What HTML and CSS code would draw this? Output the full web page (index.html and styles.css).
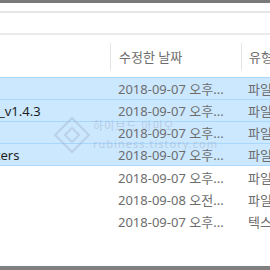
FILE: index.html
```html
<!DOCTYPE html>
<html lang="ko">
<head>
    <meta charset="UTF-8">
    <meta name="viewport" content="width=device-width, initial-scale=1.0">
    <title>파일 탐색기</title>
    <link rel="stylesheet" href="styles.css">
</head>
<body>
    <div class="window">
        <div class="titlebar"></div>
        <div class="ribbon"></div>
        <div class="address"></div>

        <!-- File list, scrolled sideways -->
        <div class="list">
            <div class="list-inner">
                <div class="head">
                    <div class="col name"></div>
                    <div class="col date"><span class="head-cell">수정한 날짜</span></div>
                    <div class="col type"><span class="head-cell">유형</span></div>
                </div>

                <div class="row sel">
                    <div class="col name"></div>
                    <div class="col date">2018-09-07 오후...</div>
                    <div class="col type">파일 폴더</div>
                </div>
                <div class="row sel">
                    <div class="col name">ckeditor-plugins_v1.4.3</div>
                    <div class="col date">2018-09-07 오후...</div>
                    <div class="col type">파일 폴더</div>
                </div>
                <div class="row sel">
                    <div class="col name"></div>
                    <div class="col date">2018-09-07 오후...</div>
                    <div class="col type">파일 폴더</div>
                </div>
                <div class="row sel last">
                    <div class="col name">ckeditor-formatters</div>
                    <div class="col date">2018-09-07 오후...</div>
                    <div class="col type">파일 폴더</div>
                </div>
                <div class="row">
                    <div class="col name"></div>
                    <div class="col date">2018-09-07 오후...</div>
                    <div class="col type">파일 폴더</div>
                </div>
                <div class="row">
                    <div class="col name"></div>
                    <div class="col date">2018-09-08 오전...</div>
                    <div class="col type">파일 폴더</div>
                </div>
                <div class="row">
                    <div class="col name"></div>
                    <div class="col date">2018-09-07 오후...</div>
                    <div class="col type">텍스트 문서</div>
                </div>
            </div>

            <!-- blog watermark -->
            <div class="watermark">
                <div class="mark-logo"><div class="mark-inner"></div></div>
                <div class="mark-text">
                    <span class="mark-title">하이브드 아미오</span>
                    <span class="mark-url">rubiness.tistory.com</span>
                </div>
            </div>
        </div>

        <div class="statusbar"></div>
    </div>
</body>
</html>
```

FILE: styles.css
```css
body {
    margin: 0;
    padding: 0;
    background: #ffffff;
    font-family: "Noto Sans", "Noto Sans CJK KR", sans-serif;
    font-size: 13px;
}
.window {
    width: 270px;
    height: 270px;
    display: flex;
    flex-direction: column;
    overflow: hidden;
}
.titlebar {
    height: 3px;
    background: #7a7a7a;
}
.ribbon {
    height: 8px;
    border-bottom: 2px solid #e6e6e6;
}
.address {
    height: 20px;
    border-bottom: 2px solid #ebebeb;
}
.list {
    flex: 1;
    position: relative;
    overflow: hidden;
}
.list-inner {
    margin-left: -130px;
    width: 560px;
}
.head {
    height: 42px;
    display: flex;
    align-items: center;
    color: #5f6670;
}
.head .col {
    height: 27px;
    display: flex;
    align-items: center;
}
.head .date,
.head .type {
    border-left: 1px solid #e5e5e5;
}
.col {
    white-space: nowrap;
    overflow: hidden;
    box-sizing: border-box;
}
.name {
    width: 240px;
    padding-left: 30px;
    color: #1e1e1e;
}
.date {
    width: 131px;
    padding-left: 8px;
    color: #6d6d6d;
}
.type {
    width: 160px;
    padding-left: 7px;
    color: #6d6d6d;
}
.row {
    height: 21px;
    display: flex;
    align-items: center;
    border-top: 1px solid transparent;
}
.row.sel {
    background: #cce8ff;
    border-top-color: #a9d8ff;
}
.row.sel.last {
    border-bottom: 1px solid #a9d8ff;
}
.watermark {
    position: absolute;
    left: 59px;
    top: 82px;
    display: flex;
    align-items: center;
    gap: 8px;
    opacity: 0.35;
    pointer-events: none;
}
.mark-logo {
    width: 22px;
    height: 22px;
    border: 2px solid #9aa8bf;
    transform: rotate(45deg);
    display: flex;
    align-items: center;
    justify-content: center;
}
.mark-inner {
    width: 8px;
    height: 8px;
    border: 2px solid #9aa8bf;
}
.mark-text {
    display: flex;
    flex-direction: column;
    color: #8c99ad;
    font-size: 11px;
    line-height: 18px;
    letter-spacing: 1px;
}
.statusbar {
    height: 4px;
    background: #808080;
}
```
